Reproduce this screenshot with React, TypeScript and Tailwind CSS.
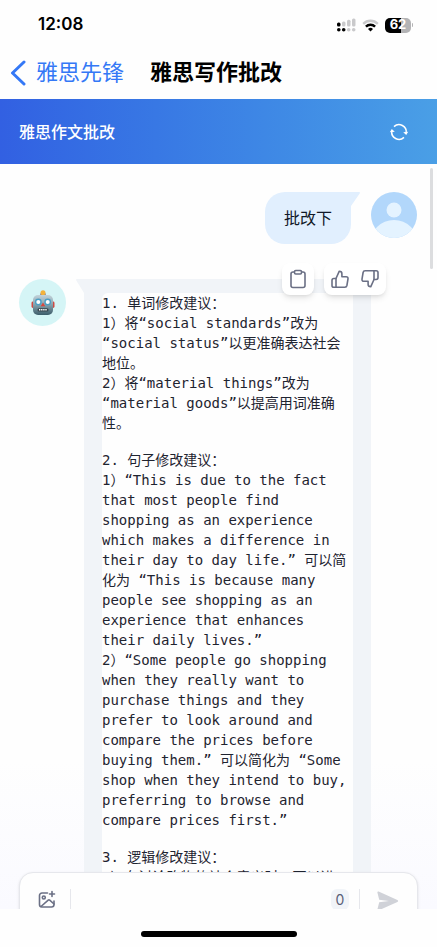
import { useState } from "react";

const ADVICE = [
  "1. 单词修改建议：\n1）将“social standards”改为\u200b“social status”以更准确表达社会地位。\n2）将“material things”改为\u200b“material goods”以提高用词准确性。",
  "2. 句子修改建议：\n1）“This is due to the fact that most people find shopping as an experience which makes a difference in their day to day life.” 可以简化为 “This is because many people see shopping as an experience that enhances their daily lives.”\n2）“Some people go shopping when they really want to purchase things and they prefer to look around and compare the prices before buying them.” 可以简化为 “Some shop when they intend to buy, preferring to browse and compare prices first.”",
  "3. 逻辑修改建议：\n1）在讨论购物的社会意义时，可以进",
];

function StatusBar() {
  return (
    <div className="flex h-[50px] shrink-0 items-center justify-between pr-6 pl-[38px] font-['Inter','Liberation_Sans',sans-serif]">
      <span className="text-[17px] font-semibold">12:08</span>
      <div className="flex items-center gap-[6px]">
        <svg width="19" height="14" viewBox="0 0 19 14" aria-label="信号">
          <g fill="#c9c9cb">
            <rect x="5" y="3.500" width="3.500" height="5" rx="1.500" />
            <rect x="10" y="1.800" width="3.500" height="6.700" rx="1.500" />
            <rect x="15" y="0.500" width="3.500" height="8" rx="1.500" />
            <circle cx="11.700" cy="11.800" r="1.800" />
            <circle cx="16.700" cy="11.800" r="1.800" />
          </g>
          <rect x="0" y="4.500" width="3.500" height="4" rx="1.500" />
          <circle cx="1.800" cy="11.800" r="1.800" />
          <circle cx="6.700" cy="11.800" r="1.800" />
        </svg>
        <svg width="17" height="13" viewBox="0 0 17 13" fill="none" aria-label="无线网络">
          <path d="M1.200 4.800a10.400 10.400 0 0 1 14.600 0" stroke="#c9c9cb" strokeWidth="2.400" />
          <path d="M3.900 7.700a6.500 6.500 0 0 1 9.200 0" stroke="#000" strokeWidth="2.400" />
          <path d="M8.500 12.600 6 10a3.600 3.600 0 0 1 5 0Z" fill="#000" />
        </svg>
        <div className="flex items-center gap-px">
          <div className="flex h-[15px] w-[26px] items-center justify-center rounded-[5px] bg-linear-to-r from-black from-62% to-[#b3b3b5] to-62% text-[13px] font-bold text-white">
            62
          </div>
          <span className="h-1 w-px rounded-r bg-[#b3b3b5]" />
        </div>
      </div>
    </div>
  );
}

function RobotFace() {
  return (
    <svg width="24" height="26" viewBox="0 0 24 26" aria-label="机器人">
      <defs>
        <linearGradient id="metal" x1="0" y1="0" x2="0" y2="1">
          <stop offset="0" stopColor="#c3d3da" />
          <stop offset="0.450" stopColor="#8ba6b1" />
          <stop offset="1" stopColor="#3c5d6a" />
        </linearGradient>
      </defs>
      <rect x="0.500" y="11.500" width="3" height="6.500" rx="1.400" fill="#cf4a45" />
      <rect x="20.500" y="11.500" width="3" height="6.500" rx="1.400" fill="#cf4a45" />
      <rect x="9.300" y="3" width="5.400" height="3" rx="1" fill="#7b6d8f" />
      <circle cx="12" cy="2.800" r="2.500" fill="#f3b23c" />
      <rect x="2" y="5" width="20" height="20" rx="5" fill="url(#metal)" />
      <circle cx="7.300" cy="12" r="3.400" fill="#4c9fc4" />
      <circle cx="16.700" cy="12" r="3.400" fill="#4c9fc4" />
      <circle cx="7.300" cy="12" r="2" fill="#fff" />
      <circle cx="16.700" cy="12" r="2" fill="#fff" />
      <path d="m12 12.500 2.300 3.800H9.700Z" fill="#d8463e" />
      <rect x="6.500" y="18.200" width="11" height="3.200" rx="1.500" fill="#36454d" />
      <path d="M8 19.800h8" stroke="#fff" strokeWidth="1.500" strokeDasharray="1.400 0.700" />
    </svg>
  );
}

function ClipboardIcon() {
  return (
    <svg width="20" height="20" viewBox="0 0 20 20" fill="none" stroke="#6b7085" strokeWidth="1.600" strokeLinejoin="round">
      <path d="M6.500 3H5a2 2 0 0 0-2 2v11.500a2 2 0 0 0 2 2h10a2 2 0 0 0 2-2V5a2 2 0 0 0-2-2h-1.500" />
      <rect x="6.500" y="1.500" width="7" height="3.500" rx="1.200" />
    </svg>
  );
}

function ThumbIcon({ down = false }: { down?: boolean }) {
  return (
    <svg
      className={down ? "rotate-180" : ""}
      width="20"
      height="20"
      viewBox="0 0 20 20"
      fill="none"
      stroke="#6b7085"
      strokeWidth="1.600"
      strokeLinecap="round"
      strokeLinejoin="round"
    >
      <path d="M6 9.500 9.300 2.200c1.500 0 2.600 1.100 2.600 2.500v3h4.300c1.200 0 2 1 1.800 2.200l-1.100 6.600c-.2 1-1 1.700-2 1.700H6Z" />
      <path d="M6 18.200H3.800c-1 0-1.800-.8-1.800-1.800v-5c0-1 .8-1.900 1.800-1.900H6" />
    </svg>
  );
}

export default function App() {
  const [draft, setDraft] = useState("");

  return (
    <div className="flex h-screen flex-col overflow-hidden bg-[#fefefe] font-['Inter','Noto_Sans_CJK_SC',sans-serif] text-black">
      <StatusBar />

      <nav className="flex h-[49px] shrink-0 items-center gap-[26px] px-[10px] pb-1">
        <a href="#home" className="flex items-center gap-[10px] text-[22px] text-[#3478f6]">
          <svg width="16" height="26" viewBox="0 0 16 26" fill="none" stroke="currentColor" strokeWidth="3" strokeLinecap="round" strokeLinejoin="round">
            <path d="M14 2 2.500 13 14 24" />
          </svg>
          雅思先锋
        </a>
        <h1 className="text-[22px] font-bold">雅思写作批改</h1>
      </nav>

      <header className="flex h-[65px] shrink-0 items-center justify-between bg-linear-to-r from-[#3260e2] to-[#4a9fe6] pr-7 pl-[19px] text-white">
        <h2 className="text-base font-medium">雅思作文批改</h2>
        <button type="button" aria-label="重新开始">
          <svg width="20" height="20" viewBox="0 0 20 20" fill="none" stroke="currentColor" strokeWidth="1.500">
            <path d="M5 4.600A7.300 7.300 0 0 1 17.200 11" />
            <path d="M15 15.400A7.300 7.300 0 0 1 2.800 9" />
            <path d="m14.200 10.200 3 2.800 2-3.300ZM5.800 9.800l-3-2.800-2 3.300Z" fill="currentColor" stroke="none" />
          </svg>
        </button>
      </header>

      <main className="relative min-h-0 flex-1 overflow-hidden bg-linear-to-b from-[#fefefe] from-80% to-[#fafaff] pr-5 pl-[19px]">
        <span className="absolute top-1 right-1 h-[101px] w-[3px] rounded-full bg-[#dcdddf]" />

        <section className="flex items-start justify-end gap-[10px] pt-7">
          <div className="flex items-start">
            <p className="rounded-[20px] rounded-tr-none bg-[#e1effe] px-[19px] py-[14px] text-base leading-6 text-[#111928]">
              批改下
            </p>
            <svg width="10" height="14" viewBox="0 0 10 14" fill="#e1effe">
              <path d="M0 0h8c1.200 0 1.300.8.700 1.600L0 14Z" />
            </svg>
          </div>
          <svg width="46" height="46" viewBox="0 0 46 46" aria-label="用户">
            <clipPath id="avatar">
              <circle cx="23" cy="23" r="23" />
            </clipPath>
            <g clipPath="url(#avatar)">
              <rect width="46" height="46" fill="#b2d7fb" />
              <circle cx="23" cy="18" r="7.500" fill="#e4f3ff" />
              <circle cx="23" cy="52" r="24" fill="#e4f3ff" />
            </g>
          </svg>
        </section>

        <section className="flex items-start gap-[10px] pt-[35px] pr-[46px]">
          <div className="flex size-[47px] shrink-0 items-center justify-center rounded-full bg-[#d5f5f6]">
            <RobotFace />
          </div>
          <div className="flex min-w-0 flex-1 items-start">
            <svg className="shrink-0" width="8" height="14" viewBox="0 0 8 14" fill="#f1f4f8">
              <path d="M8 0H1C0 0-.2.800.300 1.600L8 14Z" />
            </svg>
            <article className="relative min-w-0 flex-1 bg-[#f1f4f8] px-[18px] pt-[14px]">
              <div className="absolute -top-4 -right-[15px] flex gap-[10px]">
                <div className="flex rounded-lg bg-white p-[6px] shadow-md">
                  <button type="button" aria-label="复制">
                    <ClipboardIcon />
                  </button>
                </div>
                <div className="flex gap-[10px] rounded-lg bg-white p-[6px] shadow-md">
                  <button type="button" aria-label="赞同">
                    <ThumbIcon />
                  </button>
                  <button type="button" aria-label="反对">
                    <ThumbIcon down />
                  </button>
                </div>
              </div>
              <div className="flex flex-col gap-[17px] rounded-tl-md bg-[#fefefe] pb-10 font-['DejaVu_Sans_Mono','Noto_Sans_CJK_SC',monospace] text-sm leading-5 text-[#1f2430]">
                {ADVICE.map((text) => (
                  <p key={text} className="whitespace-pre-wrap">
                    {text}
                  </p>
                ))}
              </div>
            </article>
          </div>
        </section>

        <form
          className="absolute inset-x-[19px] -bottom-4 flex h-[53px] items-start rounded-t-[14px] border border-[#e6e7ec] bg-[#fefefe] px-[18px] pt-4 shadow-sm"
          onSubmit={(event) => event.preventDefault()}
        >
          <button type="button" aria-label="添加图片" className="pt-px">
            <svg width="18" height="20" viewBox="0 0 18 20" fill="none" stroke="#6b7085" strokeWidth="1.600" strokeLinecap="round" strokeLinejoin="round">
              <path d="M9.500 3H4a2.500 2.500 0 0 0-2.500 2.500v9A2.500 2.500 0 0 0 4 17h9.500a2.500 2.500 0 0 0 2.500-2.500V11" />
              <path d="M14 1.500v5M11.500 4h5" />
              <circle cx="5.800" cy="7.500" r="1.500" />
              <path d="m3 16.500 7.200-6.300c.5-.4 1-.4 1.500 0L16 14" />
            </svg>
          </button>
          <input
            aria-label="消息"
            className="ml-[14px] h-5 min-w-0 flex-1 border-l border-[#e6e7ec] bg-transparent px-3 text-sm outline-none"
            value={draft}
            onChange={(event) => setDraft(event.target.value)}
          />
          <span className="flex h-[21px] w-[18px] items-center justify-center rounded-md bg-[#f1f4f8] text-sm text-[#5a6078]">
            {draft.length}
          </span>
          <span className="ml-[10px] h-5 border-l border-[#e6e7ec]" />
          <button type="submit" aria-label="发送" className="ml-[17px] pt-[2px]">
            <svg width="22" height="20" viewBox="0 0 22 20" fill="#d0d2d8">
              <path d="M1.600.600 20.400 9c1 .5 1 1.500 0 2L1.600 19.400c-.9.400-1.400-.200-1.200-1L2.200 11.200 12 10 2.200 8.800.400 1.600C.200.700.800.200 1.600.600Z" />
            </svg>
          </button>
        </form>
      </main>

      <footer className="flex h-[38px] shrink-0 items-center justify-center pt-3">
        <span className="h-[6px] w-[156px] rounded-full bg-black" />
      </footer>
    </div>
  );
}
